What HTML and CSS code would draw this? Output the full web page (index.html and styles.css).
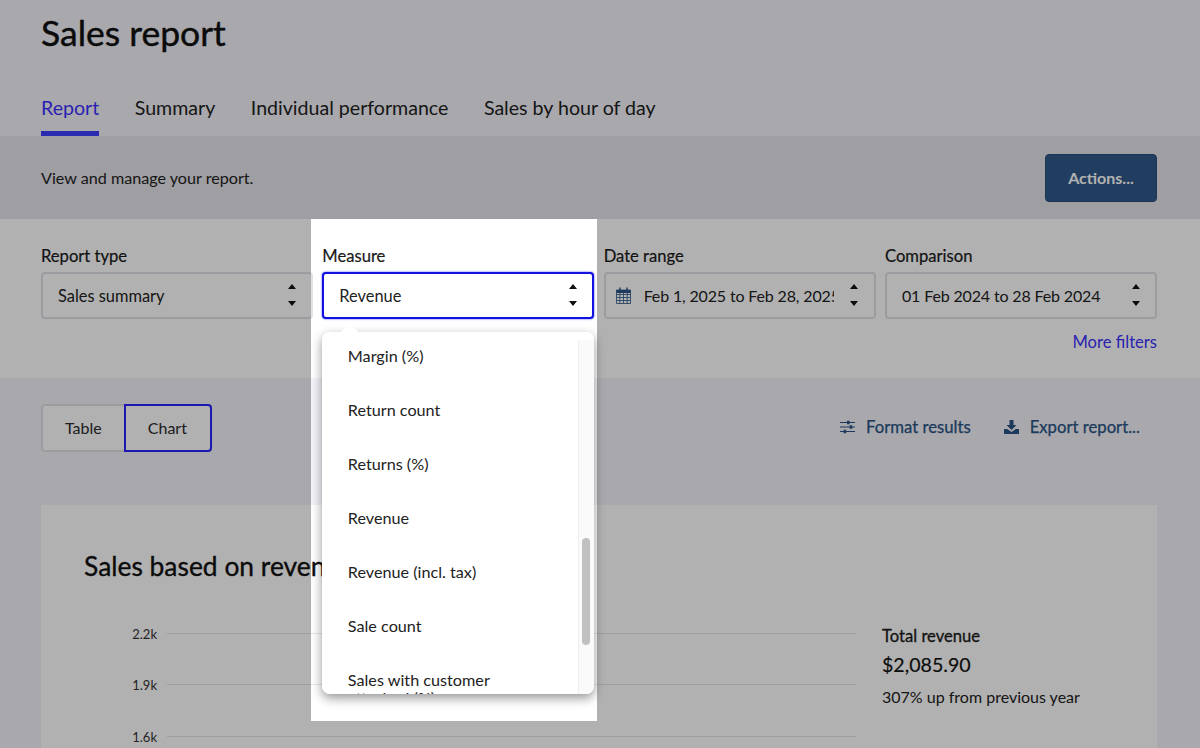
FILE: index.html
```html
<!DOCTYPE html>
<html lang="en">
<head>
<meta charset="utf-8">
<title>Sales report</title>
<link rel="stylesheet" href="styles.css">
</head>
<body>
<div class="page">
  <header class="header">
    <h1 class="title">Sales report</h1>
    <nav class="tabs">
      <a class="tab tab-active">Report</a>
      <a class="tab">Summary</a>
      <a class="tab">Individual performance</a>
      <a class="tab">Sales by hour of day</a>
    </nav>
  </header>

  <section class="band">
    <p class="band-text">View and manage your report.</p>
    <button class="btn-primary">Actions...</button>
  </section>

  <section class="filters">
    <div class="filter-grid">
      <div class="field">
        <div class="label">Report type</div>
        <div class="select"><span class="select-text">Sales summary</span>
          <svg class="updown" viewBox="0 0 10 24"><path d="M5 1 9 6H1zM5 23 1 18H9z"/></svg></div>
      </div>
      <div class="field">
        <div class="label">Measure</div>
        <div class="select select-focus"><span class="select-text">Revenue</span>
          <svg class="updown" viewBox="0 0 10 24"><path d="M5 1 9 6H1zM5 23 1 18H9z"/></svg></div>
        <div class="popover">
          <span class="arrow"></span>
          <div class="pop-inner">
            <ul class="list">
              <li>Margin (%)</li>
              <li>Return count</li>
              <li>Returns (%)</li>
              <li>Revenue</li>
              <li>Revenue (incl. tax)</li>
              <li>Sale count</li>
              <li class="wrap-item">Sales with customer<br>attached (%)</li>
            </ul>
            <div class="scrollbar"><span class="thumb"></span></div>
          </div>
        </div>
      </div>
      <div class="field">
        <div class="label">Date range</div>
        <div class="select select-date">
          <svg class="cal" viewBox="0 0 15 17"><path fill="none" stroke="#2a5485" stroke-width=".8" d="M.5 3h14v13.5H.5zM.5 7.5h14M.5 10.5h14M.5 13.5h14M3.8 6v10.5M7.5 6v10.5M11.2 6v10.5"/><path fill="#2a5485" d="M.5 3h14v3H.5z"/><path fill="none" stroke="#2a5485" stroke-width="1.4" d="M4 .5v3.5M11 .5v3.5"/></svg>
          <span class="select-text dates clip">Feb 1, 2025 to Feb 28, 2025</span>
          <svg class="updown" viewBox="0 0 10 24"><path d="M5 1 9 6H1zM5 23 1 18H9z"/></svg></div>
      </div>
      <div class="field">
        <div class="label">Comparison</div>
        <div class="select"><span class="select-text dates">01 Feb 2024 to 28 Feb 2024</span>
          <svg class="updown" viewBox="0 0 10 24"><path d="M5 1 9 6H1zM5 23 1 18H9z"/></svg></div>
      </div>
    </div>
    <div class="more"><a class="more-link">More filters</a></div>
  </section>

  <section class="toolbar">
    <div class="segment">
      <span class="seg">Table</span>
      <span class="seg seg-active">Chart</span>
    </div>
    <div class="tools">
      <a class="tool">
        <svg class="tool-icon" viewBox="0 0 15 14"><path fill="none" stroke="#2a5485" stroke-width="1.2" d="M0 2.5h15M0 7h15M0 11.5h15"/><path fill="#2a5485" d="M7 .7h2.6v3.6H7zM9.6 5.2h2.6v3.6H9.6zM3.6 9.7h2.6v3.6H3.6z"/></svg>
        Format results</a>
      <a class="tool">
        <svg class="tool-icon" viewBox="0 0 15 14"><path fill="#2a5485" d="M5.5 0h4v5h3l-5 5-5-5h3zM0 9h3.2l4.3 3 4.3-3H15v5H0z"/></svg>
        Export report...</a>
    </div>
  </section>

  <section class="card">
    <h2 class="card-title">Sales based on revenue</h2>
    <div class="card-body">
      <div class="chart">
        <div class="gridline"><span class="tick">2.2k</span><span class="rule"></span></div>
        <div class="gridline"><span class="tick">1.9k</span><span class="rule"></span></div>
        <div class="gridline"><span class="tick">1.6k</span><span class="rule"></span></div>
      </div>
      <aside class="stats">
        <div class="stat-label">Total revenue</div>
        <div class="stat-value">$2,085.90</div>
        <div class="stat-note">307% up from previous year</div>
        <div class="stat-more">Top 3 payment types by revenue</div>
      </aside>
    </div>
  </section>
</div>

<div class="spotlight"></div>
</body>
</html>
```
FILE: styles.css
```css
* { box-sizing: border-box; }
html, body { margin: 0; height: 748px; overflow: hidden; }
body { font-family: Lato, "Liberation Sans", sans-serif; color: #1c1c1c; background: #f4f3f9; position: relative; }

.page { height: 748px; overflow: hidden; }

.header { height: 136px; padding: 0 41px; display: flex; flex-direction: column; justify-content: space-between; }
.title { margin: 12px 0 0; font-size: 35.5px; line-height: 42px; font-weight: 400; color: #111; -webkit-text-stroke: .45px #111; }
.tabs { display: flex; gap: 35.5px; }
.tab { font-size: 19.6px; line-height: 24px; padding-bottom: 11px; border-bottom: 5px solid transparent; color: #222; }
.tab-active { color: #3d31fe; border-bottom-color: #3f3eff; }

.band { height: 83px; background: #e5e4ea; padding: 0 43px 0 41px; display: flex; align-items: center; justify-content: space-between; }
.band-text { margin: 0; font-size: 16.15px; color: #222; }
.btn-primary { width: 112px; height: 48px; margin: 0; background: #305989; border: 1px solid #284e78; border-radius: 4px; color: #fff; font: 700 16px Lato, sans-serif; }

.filters { height: 159px; background: #fff; padding: 27px 43px 0 41px; }
.filter-grid { display: grid; grid-template-columns: repeat(4, 272px); column-gap: 9.33px; }
.field { position: relative; }
.label { font-size: 16.6px; line-height: 20px; color: #1a1a1a; margin-bottom: 6px; -webkit-text-stroke: .2px #1a1a1a; }
.select { height: 47px; background: #fff; border: 2px solid #e1e1e7; border-radius: 4px; display: flex; align-items: center; padding: 0 14px 1px 15px; gap: 11px; }
.select-text { flex: 1; font-size: 16.4px; color: #222; white-space: nowrap; min-width: 0; }
.dates { font-size: 16px; letter-spacing: -.15px; }
.clip { overflow: hidden; margin-right: 2px; }
.select-date { padding-left: 10px; padding-right: 15px; gap: 13px; }
.select-focus { border-color: #1212e0; box-shadow: 0 0 2px #3a3aff; }
.updown { width: 10px; height: 24px; fill: #111; flex: none; }
.cal { width: 15px; height: 17px; flex: none; }
.more { text-align: right; margin-top: 13px; }
.more-link { font-size: 16.6px; line-height: 20px; color: #3d31fe; }

.toolbar { height: 127px; padding: 26px 43px 0 41px; display: flex; justify-content: space-between; align-items: flex-start; }
.segment { display: flex; height: 48px; background: #fff; border: 2px solid #e1e1e7; border-radius: 4px; }
.seg { display: flex; align-items: center; padding: 0 22px 1px; font-size: 16px; color: #2a2a2a; }
.seg-active { border: 2px solid #2525ff; border-radius: 0 4px 4px 0; margin: -2px -2px -2px 0; width: 88px; }
.tools { display: flex; gap: 33px; padding: 12px 17px 0 0; }
.tool { display: flex; align-items: center; gap: 11px; font-size: 16.7px; color: #2a5485; line-height: 22px; -webkit-text-stroke: .25px #2a5485; white-space: nowrap; }
.tool-icon { width: 15px; height: 14px; flex: none; }

.card { margin: 0 43px 0 41px; background: #fff; height: 300px; padding: 44px 43px 0; }
.card-title { margin: 0; font-size: 26.4px; line-height: 34px; font-weight: 400; color: #111; white-space: nowrap; -webkit-text-stroke: .35px #111; }
.card-body { display: flex; margin-top: 50px; }
.chart { width: 772px; flex: none; }
.gridline { display: flex; align-items: flex-start; height: 51.3px; gap: 10px; }
.tick { width: 73px; margin-top: -7px; text-align: right; font-size: 13px; line-height: 16px; color: #333; flex: none; }
.rule { flex: 1; height: 1px; background: #e6e6e8; }
.stats { margin: -7px 0 0 26px; width: 275px; }
.stat-label { font-size: 16.6px; line-height: 20px; color: #1a1a1a; -webkit-text-stroke: .3px #1a1a1a; }
.stat-value { font-size: 19.6px; line-height: 26px; margin-top: 6px; color: #141414; -webkit-text-stroke: .2px #141414; }
.stat-note { font-size: 16px; line-height: 20px; margin-top: 9px; color: #222; }
.stat-more { font-size: 16px; line-height: 20px; margin-top: 36px; color: #222; white-space: nowrap; }

.popover { position: absolute; left: 0; top: 86px; width: 272px; height: 362px; z-index: 2; background: #fff; border-radius: 8px; box-shadow: 0 4px 11px rgba(0, 0, 0, .42); }
.arrow { position: absolute; left: 21px; top: -6px; width: 13px; height: 13px; background: #fff; transform: rotate(45deg); }
.pop-inner { position: relative; height: 362px; overflow: hidden; border-radius: 8px; display: flex; background: #fff; }
.list { list-style: none; margin: 0; padding: 0 0 0 25.5px; flex: 1; font-size: 16.2px; line-height: 20px; color: #222; }
.list li { height: 54px; padding-top: 14px; }
.list .wrap-item { height: auto; line-height: 18px; padding-top: 15px; }
.scrollbar { width: 16px; flex: none; background: #fafafa; border-left: 1px solid #eee; margin-top: 8px; position: relative; }
.thumb { position: absolute; left: 3px; top: 198px; width: 8px; height: 107px; border-radius: 4px; background: #c1c1c1; }

.spotlight { position: absolute; left: 311px; top: 219px; width: 286px; height: 502px; z-index: 5; pointer-events: none; box-shadow: 0 0 0 2000px rgba(0, 0, 0, .306); }
```
